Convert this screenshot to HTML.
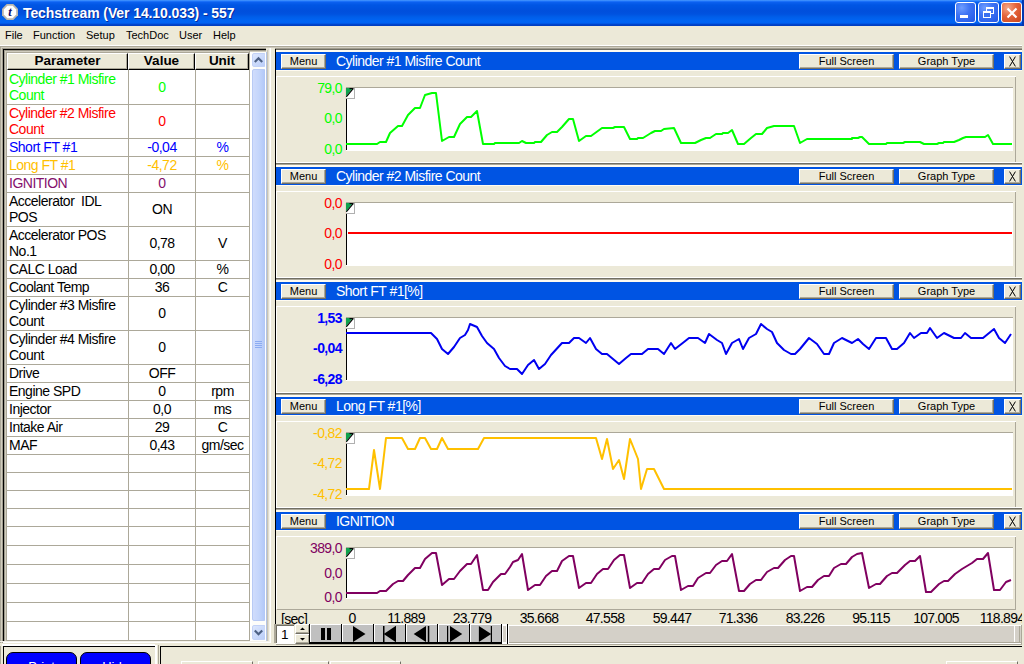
<!DOCTYPE html><html><head><meta charset="utf-8"><style>
*{margin:0;padding:0;box-sizing:border-box}
html,body{width:1024px;height:664px;overflow:hidden;background:#ece9d8;font-family:"Liberation Sans",sans-serif;position:relative}
div,span,svg{position:absolute}
.tbtn{top:2px;width:21px;height:21px;border:1px solid #fff;border-radius:3px;background:radial-gradient(circle at 30% 25%,#6e9dff 0%,#3e74f4 40%,#2257e6 100%)}
.tbtn.cl{background:radial-gradient(circle at 30% 25%,#f4a888 0%,#e4643a 45%,#c8451c 100%)}
.mn{top:29px;font-size:11px;color:#000;white-space:nowrap}
.cell{font-size:14px;letter-spacing:-0.5px;line-height:16px;white-space:nowrap}
.btn{background:#ece9d8;border-top:1px solid #fff;border-left:1px solid #fff;border-right:1px solid #716f64;border-bottom:1px solid #716f64;font-size:11px;text-align:center;color:#000;white-space:nowrap}
.gt{color:#fff;font-size:14px;letter-spacing:-0.52px;white-space:nowrap}
.lbl{font-size:14px;letter-spacing:-0.6px;text-align:right;white-space:nowrap}
.tl{font-size:14px;letter-spacing:-0.7px;top:610px;white-space:nowrap;color:#000}
</style></head><body>
<div style="left:0;top:0;width:1024px;height:26px;background:linear-gradient(#4a9bff 0px,#1a70f8 1.5px,#0a5fee 2.5px,#0056e4 5px,#004fdc 11px,#0052df 14px,#005ee9 17px,#0064f4 21px,#0062f2 23px,#0044cc 24.5px,#003cbc 26px)"></div>
<div style="left:1022px;top:0px;width:2px;height:26px;background:#0038b0;"></div>
<svg style="left:2px;top:4px" width="17" height="17" viewBox="0 0 17 17">
<polygon points="4.7,0 11.3,0 16,4.7 16,11.3 11.3,16 4.7,16 0,11.3 0,4.7" fill="#b9b6ae"/>
<polygon points="5.4,1.8 10.6,1.8 14.2,5.4 14.2,10.6 10.6,14.2 5.4,14.2 1.8,10.6 1.8,5.4" fill="#fff"/>
<text x="8" y="12.2" font-family="Liberation Serif" font-style="italic" font-weight="bold" font-size="12.5" fill="#10106a" text-anchor="middle">t</text>
</svg>
<div style="left:23px;top:5px;font-weight:bold;font-size:14px;letter-spacing:-0.1px;line-height:17px;color:#fff;text-shadow:1px 1px 0 #0a2a9a;white-space:nowrap">Techstream (Ver 14.10.033) - 557</div>
<div class="tbtn" style="left:955px"><div style="left:4px;top:12px;width:8px;height:3px;background:#fff"></div></div>
<div class="tbtn" style="left:978px"><div style="left:7px;top:4px;width:8px;height:7px;border:1px solid #fff;border-top-width:2px"></div><div style="left:4px;top:8px;width:8px;height:7px;border:1px solid #fff;border-top-width:2px;background:#3a70f0"></div></div>
<div class="tbtn cl" style="left:1001px"><svg style="left:3px;top:3px" width="14" height="14"><path d="M2.5,2.5 L11.5,11.5 M11.5,2.5 L2.5,11.5" stroke="#fff" stroke-width="2.2"/></svg></div>
<div class="mn" style="left:5px">File</div>
<div class="mn" style="left:33px">Function</div>
<div class="mn" style="left:86px">Setup</div>
<div class="mn" style="left:126px">TechDoc</div>
<div class="mn" style="left:179px">User</div>
<div class="mn" style="left:213px">Help</div>
<div style="left:0px;top:45px;width:1022px;height:1px;background:#fff;"></div>
<div style="left:0px;top:46px;width:1022px;height:1px;background:#aca899;"></div>
<div style="left:0px;top:47px;width:1022px;height:1px;background:#d0ccbe;"></div>
<div style="left:0px;top:48px;width:1022px;height:1px;background:#a09c8e;"></div>
<div style="left:0px;top:46px;width:1px;height:618px;background:#aca899;"></div>
<div style="left:1px;top:47px;width:1px;height:599px;background:#d0ccbe;"></div>
<div style="left:2px;top:48px;width:1px;height:598px;background:#a09c8e;"></div>
<div style="left:3px;top:49px;width:265px;height:1px;background:#000;"></div>
<div style="left:3px;top:49px;width:1px;height:592px;background:#000;"></div>
<div style="left:4px;top:50px;width:265px;height:1px;background:#a09c8e;"></div>
<div style="left:4px;top:50px;width:1px;height:591px;background:#a09c8e;"></div>
<div style="left:5px;top:51px;width:264px;height:1px;background:#d0ccbe;"></div>
<div style="left:6px;top:52px;width:263px;height:1px;background:#aca899;"></div>
<div style="left:5px;top:51px;width:1px;height:590px;background:#d0ccbe;"></div>
<div style="left:6px;top:52px;width:1px;height:589px;background:#aca899;"></div>
<div style="left:7px;top:53px;width:243px;height:588px;background:#fff;"></div>
<div style="left:7px;top:53px;width:121px;height:17px;background:#ece9d8;border-top:1px solid #fff;border-left:1px solid #fff;border-right:1px solid #000;border-bottom:1px solid #000;box-shadow:inset -1px -1px 0 #aca899"></div>
<div style="left:7px;top:53px;width:121px;text-align:center;font-weight:bold;font-size:13.5px;line-height:16px;color:#000">Parameter</div>
<div style="left:128px;top:53px;width:67px;height:17px;background:#ece9d8;border-top:1px solid #fff;border-left:1px solid #fff;border-right:1px solid #000;border-bottom:1px solid #000;box-shadow:inset -1px -1px 0 #aca899"></div>
<div style="left:128px;top:53px;width:67px;text-align:center;font-weight:bold;font-size:13.5px;line-height:16px;color:#000">Value</div>
<div style="left:195px;top:53px;width:54px;height:17px;background:#ece9d8;border-top:1px solid #fff;border-left:1px solid #fff;border-right:1px solid #000;border-bottom:1px solid #000;box-shadow:inset -1px -1px 0 #aca899"></div>
<div style="left:195px;top:53px;width:54px;text-align:center;font-weight:bold;font-size:13.5px;line-height:16px;color:#000">Unit</div>
<div class="cell" style="left:9px;top:71px;color:#00ff00">Cylinder #1 Misfire<br>Count</div>
<div class="cell" style="left:129px;width:66px;text-align:center;top:79px;color:#00ff00">0</div>
<div class="cell" style="left:9px;top:105px;color:#ff0000">Cylinder #2 Misfire<br>Count</div>
<div class="cell" style="left:129px;width:66px;text-align:center;top:113px;color:#ff0000">0</div>
<div class="cell" style="left:9px;top:139px;color:#0000ff">Short FT #1</div>
<div class="cell" style="left:129px;width:66px;text-align:center;top:139px;color:#0000ff">-0,04</div>
<div class="cell" style="left:196px;width:53px;text-align:center;top:139px;color:#0000ff">%</div>
<div class="cell" style="left:9px;top:157px;color:#ffc000">Long FT #1</div>
<div class="cell" style="left:129px;width:66px;text-align:center;top:157px;color:#ffc000">-4,72</div>
<div class="cell" style="left:196px;width:53px;text-align:center;top:157px;color:#ffc000">%</div>
<div class="cell" style="left:9px;top:175px;color:#84106c">IGNITION</div>
<div class="cell" style="left:129px;width:66px;text-align:center;top:175px;color:#84106c">0</div>
<div class="cell" style="left:9px;top:193px;color:#000">Accelerator&nbsp; IDL<br>POS</div>
<div class="cell" style="left:129px;width:66px;text-align:center;top:201px;color:#000">ON</div>
<div class="cell" style="left:9px;top:227px;color:#000">Accelerator POS<br>No.1</div>
<div class="cell" style="left:129px;width:66px;text-align:center;top:235px;color:#000">0,78</div>
<div class="cell" style="left:196px;width:53px;text-align:center;top:235px;color:#000">V</div>
<div class="cell" style="left:9px;top:261px;color:#000">CALC Load</div>
<div class="cell" style="left:129px;width:66px;text-align:center;top:261px;color:#000">0,00</div>
<div class="cell" style="left:196px;width:53px;text-align:center;top:261px;color:#000">%</div>
<div class="cell" style="left:9px;top:279px;color:#000">Coolant Temp</div>
<div class="cell" style="left:129px;width:66px;text-align:center;top:279px;color:#000">36</div>
<div class="cell" style="left:196px;width:53px;text-align:center;top:279px;color:#000">C</div>
<div class="cell" style="left:9px;top:297px;color:#000">Cylinder #3 Misfire<br>Count</div>
<div class="cell" style="left:129px;width:66px;text-align:center;top:305px;color:#000">0</div>
<div class="cell" style="left:9px;top:331px;color:#000">Cylinder #4 Misfire<br>Count</div>
<div class="cell" style="left:129px;width:66px;text-align:center;top:339px;color:#000">0</div>
<div class="cell" style="left:9px;top:365px;color:#000">Drive</div>
<div class="cell" style="left:129px;width:66px;text-align:center;top:365px;color:#000">OFF</div>
<div class="cell" style="left:9px;top:383px;color:#000">Engine SPD</div>
<div class="cell" style="left:129px;width:66px;text-align:center;top:383px;color:#000">0</div>
<div class="cell" style="left:196px;width:53px;text-align:center;top:383px;color:#000">rpm</div>
<div class="cell" style="left:9px;top:401px;color:#000">Injector</div>
<div class="cell" style="left:129px;width:66px;text-align:center;top:401px;color:#000">0,0</div>
<div class="cell" style="left:196px;width:53px;text-align:center;top:401px;color:#000">ms</div>
<div class="cell" style="left:9px;top:419px;color:#000">Intake Air</div>
<div class="cell" style="left:129px;width:66px;text-align:center;top:419px;color:#000">29</div>
<div class="cell" style="left:196px;width:53px;text-align:center;top:419px;color:#000">C</div>
<div class="cell" style="left:9px;top:437px;color:#000">MAF</div>
<div class="cell" style="left:129px;width:66px;text-align:center;top:437px;color:#000">0,43</div>
<div class="cell" style="left:196px;width:53px;text-align:center;top:437px;color:#000">gm/sec</div>
<div style="left:7px;top:104px;width:243px;height:1px;background:#aca899;"></div>
<div style="left:7px;top:138px;width:243px;height:1px;background:#aca899;"></div>
<div style="left:7px;top:156px;width:243px;height:1px;background:#aca899;"></div>
<div style="left:7px;top:174px;width:243px;height:1px;background:#aca899;"></div>
<div style="left:7px;top:192px;width:243px;height:1px;background:#aca899;"></div>
<div style="left:7px;top:226px;width:243px;height:1px;background:#aca899;"></div>
<div style="left:7px;top:260px;width:243px;height:1px;background:#aca899;"></div>
<div style="left:7px;top:278px;width:243px;height:1px;background:#aca899;"></div>
<div style="left:7px;top:296px;width:243px;height:1px;background:#aca899;"></div>
<div style="left:7px;top:330px;width:243px;height:1px;background:#aca899;"></div>
<div style="left:7px;top:364px;width:243px;height:1px;background:#aca899;"></div>
<div style="left:7px;top:382px;width:243px;height:1px;background:#aca899;"></div>
<div style="left:7px;top:400px;width:243px;height:1px;background:#aca899;"></div>
<div style="left:7px;top:418px;width:243px;height:1px;background:#aca899;"></div>
<div style="left:7px;top:436px;width:243px;height:1px;background:#aca899;"></div>
<div style="left:7px;top:454px;width:243px;height:1px;background:#aca899;"></div>
<div style="left:7px;top:472px;width:243px;height:1px;background:#aca899;"></div>
<div style="left:7px;top:490px;width:243px;height:1px;background:#aca899;"></div>
<div style="left:7px;top:508px;width:243px;height:1px;background:#aca899;"></div>
<div style="left:7px;top:526px;width:243px;height:1px;background:#aca899;"></div>
<div style="left:7px;top:545px;width:243px;height:1px;background:#aca899;"></div>
<div style="left:7px;top:564px;width:243px;height:1px;background:#aca899;"></div>
<div style="left:7px;top:583px;width:243px;height:1px;background:#aca899;"></div>
<div style="left:7px;top:602px;width:243px;height:1px;background:#aca899;"></div>
<div style="left:7px;top:621px;width:243px;height:1px;background:#aca899;"></div>
<div style="left:128px;top:70px;width:1px;height:571px;background:#aca899;"></div>
<div style="left:195px;top:70px;width:1px;height:571px;background:#aca899;"></div>
<div style="left:249px;top:51px;width:1px;height:590px;background:#aca899;"></div>
<div style="left:7px;top:640px;width:243px;height:1px;background:#aca899;"></div>
<div style="left:250px;top:52px;width:15px;height:589px;background:#fdfdfa;"></div>
<div style="left:250px;top:52px;width:2px;height:589px;background:#fff;"></div>
<div style="left:252px;top:53px;width:14px;height:14px;border-radius:2px;background:linear-gradient(135deg,#dde7fd,#b9cdf9);border:1px solid #c3d2f7"></div>
<svg style="left:253px;top:56px" width="12" height="8"><path d="M1.8,6 L5.5,2.3 L9.2,6" stroke="#4d6185" stroke-width="2.2" fill="none"/></svg>
<div style="left:252px;top:69px;width:14px;height:552px;border-radius:2px;background:linear-gradient(90deg,#d0dcfc,#c4d5fb 50%,#b1c7f7);border:1px solid #b8caf5"></div>
<div style="left:255px;top:341px;width:7px;height:1px;background:#8cabf2;"></div>
<div style="left:255px;top:343px;width:7px;height:1px;background:#8cabf2;"></div>
<div style="left:255px;top:345px;width:7px;height:1px;background:#8cabf2;"></div>
<div style="left:255px;top:347px;width:7px;height:1px;background:#8cabf2;"></div>
<div style="left:252px;top:625px;width:14px;height:15px;border-radius:2px;background:linear-gradient(135deg,#dde7fd,#b9cdf9);border:1px solid #c3d2f7"></div>
<svg style="left:253px;top:628px" width="12" height="9"><path d="M1.8,2.5 L5.5,6.2 L9.2,2.5" stroke="#4d6185" stroke-width="2.2" fill="none"/></svg>
<div style="left:266px;top:48px;width:9px;height:600px;background:#ece9d8;"></div>
<div style="left:265px;top:52px;width:1px;height:589px;background:#fff;"></div>
<div style="left:266px;top:52px;width:1px;height:589px;background:#b4c4e4;"></div>
<div style="left:267px;top:50px;width:1px;height:592px;background:#c8c4b6;"></div>
<div style="left:268px;top:49px;width:1px;height:593px;background:#e0ddd0;"></div>
<div style="left:269px;top:48px;width:1px;height:595px;background:#f4f2ea;"></div>
<div style="left:270px;top:48px;width:1px;height:596px;background:#fff;"></div>
<div style="left:0px;top:641px;width:270px;height:1px;background:#f4f2ea;"></div>
<div style="left:3px;top:642px;width:267px;height:1px;background:#fff;"></div>
<div style="left:275px;top:49px;width:747px;height:1px;background:#716f64;"></div>
<div style="left:275px;top:49px;width:1px;height:575px;background:#000;"></div>
<div style="left:276px;top:50px;width:746px;height:2px;background:#fffbf0;"></div>
<div style="left:276px;top:52px;width:746px;height:18px;background:#0054e3;"></div>
<div class="btn" style="left:281px;top:54px;width:45px;height:15px;line-height:13px;box-shadow:inset -1px -1px 0 #aca899">Menu</div>
<div class="gt" style="left:336px;top:53px;line-height:16px">Cylinder #1 Misfire Count</div>
<div class="btn" style="left:799px;top:54px;width:95px;height:15px;line-height:13px;box-shadow:inset -1px -1px 0 #aca899">Full Screen</div>
<div class="btn" style="left:899px;top:54px;width:95px;height:15px;line-height:13px;box-shadow:inset -1px -1px 0 #aca899">Graph Type</div>
<div class="btn" style="left:1004px;top:54px;width:17px;height:15px;box-shadow:inset -1px -1px 0 #aca899"></div>
<svg style="left:1004px;top:54px" width="17" height="15"><path d="M5.6,2.6 L11.4,12.4 M11.4,2.6 L5.6,12.4" stroke="#000" stroke-width="1" fill="none"/></svg>
<div style="left:276px;top:76px;width:740px;height:1px;background:#fff;"></div>
<div style="left:276px;top:76px;width:1px;height:87px;background:#fff;"></div>
<div style="left:276px;top:70px;width:746px;height:1px;background:#fffbf0;"></div>
<div style="left:1015px;top:77px;width:1px;height:86px;background:#aca899;"></div>
<div style="left:276px;top:162px;width:746px;height:1px;background:#fff;"></div>
<div style="left:276px;top:163px;width:746px;height:1px;background:#716f64;"></div>
<div style="left:276px;top:164px;width:746px;height:1px;background:#aca899;"></div>
<div style="left:276px;top:165px;width:746px;height:2px;background:#fffbf0;"></div>
<div style="left:346px;top:87px;width:667px;height:1px;background:#aca899;"></div>
<div style="left:346px;top:88px;width:667px;height:63px;background:#fff;"></div>
<div style="left:346px;top:99px;width:1px;height:51px;background:#000;"></div>
<svg style="left:345px;top:87px" width="12" height="13" shape-rendering="crispEdges"><rect x="9" y="1" width="1" height="11" fill="#b0b0b0"/><rect x="1" y="11" width="9" height="1" fill="#b0b0b0"/><rect x="0" y="1" width="1" height="11" fill="#e8d8c8"/></svg>
<svg style="left:345px;top:87px" width="12" height="13"><polygon points="1,1 8,1 1,9.5" fill="#0fa34e"/><path d="M8.2,1.6 L1.3,9.8" stroke="#000" stroke-width="1.1"/><path d="M4.5,1.6 L8.5,1.6" stroke="#000" stroke-width="1.1"/></svg>
<div class="lbl" style="left:280px;width:62px;top:80px;line-height:16px;color:#00ff00;font-weight:normal">79,0</div>
<div class="lbl" style="left:280px;width:62px;top:110px;line-height:16px;color:#00ff00;font-weight:normal">0,0</div>
<div class="lbl" style="left:280px;width:62px;top:141px;line-height:16px;color:#00ff00;font-weight:normal">0,0</div>
<svg style="left:0;top:0" width="1024" height="664"><polyline points="346,144 377,144 380,142 386,142 390,133 398,126 402,126 408,115 415,108 420,108 425,95 432,93 436,93 442,141 449,137 454,137 460,124 467,117 471,117 477,111 483,144 494,144 495,143 519,143 522,141 526,143 534,143 535,142 541,142 547,135 552,132 557,132 562,127 569,119 573,119 579,141 586,136 591,136 602,128 613,128 615,127 624,127 630,139 637,139 638,138 643,138 651,133 655,131 661,131 664,129 674,128 681,143 695,143 701,140 706,138 710,138 716,134 722,134 723,133 728,133 732,130 738,144 744,144 751,138 756,134 762,134 767,128 774,126 794,126 800,143 807,139 852,139 852,138 858,138 860,137 862,137 869,144 886,144 887,143 903,143 905,142 920,142 924,144 937,144 939,143 943,143 944,142 954,142 959,140 963,138 966,137 985,137 988,135 993,144 1012,144" fill="none" stroke="#00ff00" stroke-width="2" stroke-linejoin="round"/></svg>
<div style="left:276px;top:167px;width:746px;height:18px;background:#0054e3;"></div>
<div class="btn" style="left:281px;top:169px;width:45px;height:15px;line-height:13px;box-shadow:inset -1px -1px 0 #aca899">Menu</div>
<div class="gt" style="left:336px;top:168px;line-height:16px">Cylinder #2 Misfire Count</div>
<div class="btn" style="left:799px;top:169px;width:95px;height:15px;line-height:13px;box-shadow:inset -1px -1px 0 #aca899">Full Screen</div>
<div class="btn" style="left:899px;top:169px;width:95px;height:15px;line-height:13px;box-shadow:inset -1px -1px 0 #aca899">Graph Type</div>
<div class="btn" style="left:1004px;top:169px;width:17px;height:15px;box-shadow:inset -1px -1px 0 #aca899"></div>
<svg style="left:1004px;top:169px" width="17" height="15"><path d="M5.6,2.6 L11.4,12.4 M11.4,2.6 L5.6,12.4" stroke="#000" stroke-width="1" fill="none"/></svg>
<div style="left:276px;top:191px;width:740px;height:1px;background:#fff;"></div>
<div style="left:276px;top:191px;width:1px;height:87px;background:#fff;"></div>
<div style="left:276px;top:185px;width:746px;height:1px;background:#fffbf0;"></div>
<div style="left:1015px;top:192px;width:1px;height:86px;background:#aca899;"></div>
<div style="left:276px;top:277px;width:746px;height:1px;background:#fff;"></div>
<div style="left:276px;top:278px;width:746px;height:1px;background:#716f64;"></div>
<div style="left:276px;top:279px;width:746px;height:1px;background:#aca899;"></div>
<div style="left:276px;top:280px;width:746px;height:2px;background:#fffbf0;"></div>
<div style="left:346px;top:202px;width:667px;height:1px;background:#aca899;"></div>
<div style="left:346px;top:203px;width:667px;height:63px;background:#fff;"></div>
<div style="left:346px;top:214px;width:1px;height:51px;background:#000;"></div>
<svg style="left:345px;top:202px" width="12" height="13" shape-rendering="crispEdges"><rect x="9" y="1" width="1" height="11" fill="#b0b0b0"/><rect x="1" y="11" width="9" height="1" fill="#b0b0b0"/><rect x="0" y="1" width="1" height="11" fill="#e8d8c8"/></svg>
<svg style="left:345px;top:202px" width="12" height="13"><polygon points="1,1 8,1 1,9.5" fill="#0fa34e"/><path d="M8.2,1.6 L1.3,9.8" stroke="#000" stroke-width="1.1"/><path d="M4.5,1.6 L8.5,1.6" stroke="#000" stroke-width="1.1"/></svg>
<div class="lbl" style="left:280px;width:62px;top:195px;line-height:16px;color:#ff0000;font-weight:normal">0,0</div>
<div class="lbl" style="left:280px;width:62px;top:225px;line-height:16px;color:#ff0000;font-weight:normal">0,0</div>
<div class="lbl" style="left:280px;width:62px;top:256px;line-height:16px;color:#ff0000;font-weight:normal">0,0</div>
<svg style="left:0;top:0" width="1024" height="664"><polyline points="348,233 1012,233" fill="none" stroke="#ff0000" stroke-width="2" stroke-linejoin="round"/></svg>
<div style="left:276px;top:282px;width:746px;height:18px;background:#0054e3;"></div>
<div class="btn" style="left:281px;top:284px;width:45px;height:15px;line-height:13px;box-shadow:inset -1px -1px 0 #aca899">Menu</div>
<div class="gt" style="left:336px;top:283px;line-height:16px">Short FT #1[%]</div>
<div class="btn" style="left:799px;top:284px;width:95px;height:15px;line-height:13px;box-shadow:inset -1px -1px 0 #aca899">Full Screen</div>
<div class="btn" style="left:899px;top:284px;width:95px;height:15px;line-height:13px;box-shadow:inset -1px -1px 0 #aca899">Graph Type</div>
<div class="btn" style="left:1004px;top:284px;width:17px;height:15px;box-shadow:inset -1px -1px 0 #aca899"></div>
<svg style="left:1004px;top:284px" width="17" height="15"><path d="M5.6,2.6 L11.4,12.4 M11.4,2.6 L5.6,12.4" stroke="#000" stroke-width="1" fill="none"/></svg>
<div style="left:276px;top:306px;width:740px;height:1px;background:#fff;"></div>
<div style="left:276px;top:306px;width:1px;height:87px;background:#fff;"></div>
<div style="left:276px;top:300px;width:746px;height:1px;background:#fffbf0;"></div>
<div style="left:1015px;top:307px;width:1px;height:86px;background:#aca899;"></div>
<div style="left:276px;top:392px;width:746px;height:1px;background:#fff;"></div>
<div style="left:276px;top:393px;width:746px;height:1px;background:#716f64;"></div>
<div style="left:276px;top:394px;width:746px;height:1px;background:#aca899;"></div>
<div style="left:276px;top:395px;width:746px;height:2px;background:#fffbf0;"></div>
<div style="left:346px;top:317px;width:667px;height:1px;background:#aca899;"></div>
<div style="left:346px;top:318px;width:667px;height:63px;background:#fff;"></div>
<div style="left:346px;top:329px;width:1px;height:51px;background:#000;"></div>
<svg style="left:345px;top:317px" width="12" height="13" shape-rendering="crispEdges"><rect x="9" y="1" width="1" height="11" fill="#b0b0b0"/><rect x="1" y="11" width="9" height="1" fill="#b0b0b0"/><rect x="0" y="1" width="1" height="11" fill="#e8d8c8"/></svg>
<svg style="left:345px;top:317px" width="12" height="13"><polygon points="1,1 8,1 1,9.5" fill="#0fa34e"/><path d="M8.2,1.6 L1.3,9.8" stroke="#000" stroke-width="1.1"/><path d="M4.5,1.6 L8.5,1.6" stroke="#000" stroke-width="1.1"/></svg>
<div class="lbl" style="left:280px;width:62px;top:310px;line-height:16px;color:#0000ff;font-weight:bold">1,53</div>
<div class="lbl" style="left:280px;width:62px;top:340px;line-height:16px;color:#0000ff;font-weight:bold">-0,04</div>
<div class="lbl" style="left:280px;width:62px;top:371px;line-height:16px;color:#0000ff;font-weight:bold">-6,28</div>
<svg style="left:0;top:0" width="1024" height="664"><polyline points="346,333 431,333 437,339 442,349 448,354 454,347 460,338 465,335 468,330 470,324 477,327 482,336 487,343 494,349 499,358 505,366 510,369 517,369 522,374 528,365 534,360 539,369 545,364 551,355 562,343 569,343 574,338 579,338 586,343 590,338 596,349 602,354 607,354 619,364 626,358 631,354 642,354 648,349 658,349 664,354 671,343 675,349 684,342 689,338 698,338 705,343 709,334 717,340 722,343 726,354 732,343 739,339 743,349 749,338 756,334 761,324 767,329 772,332 777,343 784,350 791,354 795,354 800,349 809,338 817,344 824,354 829,354 834,343 842,338 852,343 858,339 863,344 869,349 876,338 886,338 892,349 897,349 904,343 910,333 914,338 921,333 927,333 930,328 937,338 944,333 954,338 961,338 965,333 971,338 983,338 994,329 999,338 1005,343 1011,334" fill="none" stroke="#0000f0" stroke-width="2" stroke-linejoin="round"/></svg>
<div style="left:276px;top:397px;width:746px;height:18px;background:#0054e3;"></div>
<div class="btn" style="left:281px;top:399px;width:45px;height:15px;line-height:13px;box-shadow:inset -1px -1px 0 #aca899">Menu</div>
<div class="gt" style="left:336px;top:398px;line-height:16px">Long FT #1[%]</div>
<div class="btn" style="left:799px;top:399px;width:95px;height:15px;line-height:13px;box-shadow:inset -1px -1px 0 #aca899">Full Screen</div>
<div class="btn" style="left:899px;top:399px;width:95px;height:15px;line-height:13px;box-shadow:inset -1px -1px 0 #aca899">Graph Type</div>
<div class="btn" style="left:1004px;top:399px;width:17px;height:15px;box-shadow:inset -1px -1px 0 #aca899"></div>
<svg style="left:1004px;top:399px" width="17" height="15"><path d="M5.6,2.6 L11.4,12.4 M11.4,2.6 L5.6,12.4" stroke="#000" stroke-width="1" fill="none"/></svg>
<div style="left:276px;top:421px;width:740px;height:1px;background:#fff;"></div>
<div style="left:276px;top:421px;width:1px;height:87px;background:#fff;"></div>
<div style="left:276px;top:415px;width:746px;height:1px;background:#fffbf0;"></div>
<div style="left:1015px;top:422px;width:1px;height:86px;background:#aca899;"></div>
<div style="left:276px;top:507px;width:746px;height:1px;background:#fff;"></div>
<div style="left:276px;top:508px;width:746px;height:1px;background:#716f64;"></div>
<div style="left:276px;top:509px;width:746px;height:1px;background:#aca899;"></div>
<div style="left:276px;top:510px;width:746px;height:2px;background:#fffbf0;"></div>
<div style="left:346px;top:432px;width:667px;height:1px;background:#aca899;"></div>
<div style="left:346px;top:433px;width:667px;height:63px;background:#fff;"></div>
<div style="left:346px;top:444px;width:1px;height:51px;background:#000;"></div>
<svg style="left:345px;top:432px" width="12" height="13" shape-rendering="crispEdges"><rect x="9" y="1" width="1" height="11" fill="#b0b0b0"/><rect x="1" y="11" width="9" height="1" fill="#b0b0b0"/><rect x="0" y="1" width="1" height="11" fill="#e8d8c8"/></svg>
<svg style="left:345px;top:432px" width="12" height="13"><polygon points="1,1 8,1 1,9.5" fill="#0fa34e"/><path d="M8.2,1.6 L1.3,9.8" stroke="#000" stroke-width="1.1"/><path d="M4.5,1.6 L8.5,1.6" stroke="#000" stroke-width="1.1"/></svg>
<div class="lbl" style="left:280px;width:62px;top:425px;line-height:16px;color:#ffc000;font-weight:normal">-0,82</div>
<div class="lbl" style="left:280px;width:62px;top:455px;line-height:16px;color:#ffc000;font-weight:normal">-4,72</div>
<div class="lbl" style="left:280px;width:62px;top:486px;line-height:16px;color:#ffc000;font-weight:normal">-4,72</div>
<svg style="left:0;top:0" width="1024" height="664"><polyline points="346,489 369,489 374,450 380,489 386,438 402,438 408,449 415,449 420,438 425,438 431,449 437,449 442,438 448,449 478,449 484,438 596,438 602,459 607,439 613,469 619,460 624,479 630,439 638,459 641,489 647,469 654,469 664,489 1012,489" fill="none" stroke="#ffc000" stroke-width="2" stroke-linejoin="round"/></svg>
<div style="left:276px;top:512px;width:746px;height:18px;background:#0054e3;"></div>
<div class="btn" style="left:281px;top:514px;width:45px;height:15px;line-height:13px;box-shadow:inset -1px -1px 0 #aca899">Menu</div>
<div class="gt" style="left:336px;top:513px;line-height:16px">IGNITION</div>
<div class="btn" style="left:799px;top:514px;width:95px;height:15px;line-height:13px;box-shadow:inset -1px -1px 0 #aca899">Full Screen</div>
<div class="btn" style="left:899px;top:514px;width:95px;height:15px;line-height:13px;box-shadow:inset -1px -1px 0 #aca899">Graph Type</div>
<div class="btn" style="left:1004px;top:514px;width:17px;height:15px;box-shadow:inset -1px -1px 0 #aca899"></div>
<svg style="left:1004px;top:514px" width="17" height="15"><path d="M5.6,2.6 L11.4,12.4 M11.4,2.6 L5.6,12.4" stroke="#000" stroke-width="1" fill="none"/></svg>
<div style="left:276px;top:536px;width:740px;height:1px;background:#fff;"></div>
<div style="left:276px;top:536px;width:1px;height:73px;background:#fff;"></div>
<div style="left:276px;top:530px;width:746px;height:1px;background:#fffbf0;"></div>
<div style="left:1015px;top:537px;width:1px;height:72px;background:#aca899;"></div>
<div style="left:277px;top:609px;width:739px;height:1px;background:#aca899;"></div>
<div style="left:346px;top:547px;width:667px;height:1px;background:#aca899;"></div>
<div style="left:346px;top:548px;width:667px;height:51px;background:#fff;"></div>
<div style="left:346px;top:559px;width:1px;height:39px;background:#000;"></div>
<svg style="left:345px;top:547px" width="12" height="13" shape-rendering="crispEdges"><rect x="9" y="1" width="1" height="11" fill="#b0b0b0"/><rect x="1" y="11" width="9" height="1" fill="#b0b0b0"/><rect x="0" y="1" width="1" height="11" fill="#e8d8c8"/></svg>
<svg style="left:345px;top:547px" width="12" height="13"><polygon points="1,1 8,1 1,9.5" fill="#0fa34e"/><path d="M8.2,1.6 L1.3,9.8" stroke="#000" stroke-width="1.1"/><path d="M4.5,1.6 L8.5,1.6" stroke="#000" stroke-width="1.1"/></svg>
<div class="lbl" style="left:280px;width:62px;top:540px;line-height:16px;color:#800060;font-weight:normal">389,0</div>
<div class="lbl" style="left:280px;width:62px;top:565px;line-height:16px;color:#800060;font-weight:normal">0,0</div>
<div class="lbl" style="left:280px;width:62px;top:589px;line-height:16px;color:#800060;font-weight:normal">0,0</div>
<svg style="left:0;top:0" width="1024" height="664"><polyline points="346,593 377,593 380,591 386,591 393,584 398,581 403,581 408,575 415,568 420,568 425,559 432,553 436,553 442,585 449,579 454,579 460,571 467,564 471,564 477,555 483,590 488,590 493,582 501,574 505,574 510,567 513,562 518,560 522,554 528,590 535,585 540,585 546,576 552,571 557,571 562,561 569,556 573,556 579,588 586,583 591,583 597,574 603,569 608,569 614,560 620,555 624,555 630,588 637,583 642,583 648,574 654,569 659,569 665,560 672,556 675,556 681,590 688,586 693,586 698,578 706,573 710,573 716,565 722,561 727,561 732,554 739,591 744,591 750,584 756,580 761,580 767,572 774,568 778,568 785,560 791,556 794,556 800,591 807,587 812,587 818,580 824,576 829,576 834,568 841,564 846,564 852,557 857,554 862,553 869,588 876,584 880,584 887,576 892,573 897,573 905,565 910,561 915,561 920,556 926,592 931,592 939,584 944,581 948,581 955,574 962,569 967,566 972,563 977,559 983,559 988,553 994,590 1000,590 1006,582 1011,580" fill="none" stroke="#800060" stroke-width="2" stroke-linejoin="round"/></svg>
<div class="tl" style="left:281px;top:611px;color:#000">[sec]</div>
<div class="tl" style="left:312px;width:80px;text-align:center">0</div>
<div class="tl" style="left:366px;width:80px;text-align:center">11.889</div>
<div class="tl" style="left:432px;width:80px;text-align:center">23.779</div>
<div class="tl" style="left:499px;width:80px;text-align:center">35.668</div>
<div class="tl" style="left:565px;width:80px;text-align:center">47.558</div>
<div class="tl" style="left:632px;width:80px;text-align:center">59.447</div>
<div class="tl" style="left:698px;width:80px;text-align:center">71.336</div>
<div class="tl" style="left:765px;width:80px;text-align:center">83.226</div>
<div class="tl" style="left:831px;width:80px;text-align:center">95.115</div>
<div class="tl" style="left:896px;width:80px;text-align:center">107.005</div>
<div style="left:970px;top:605px;width:52px;height:20px;overflow:hidden"><div class="tl" style="left:-8px;top:5px;width:80px;text-align:center">118.894</div></div>
<div style="left:270px;top:645px;width:752px;height:1px;background:#ece9d8;"></div>
<div style="left:274px;top:624px;width:21px;height:1px;background:#aca899;"></div>
<div style="left:274px;top:624px;width:2px;height:19px;background:#aca899;"></div>
<div style="left:276px;top:625px;width:18px;height:1px;background:#716f64;"></div>
<div style="left:276px;top:625px;width:1px;height:18px;background:#716f64;"></div>
<div style="left:277px;top:626px;width:17px;height:17px;background:#fff;"></div>
<div style="left:274px;top:643px;width:21px;height:1px;background:#fff;"></div>
<div style="left:276px;top:644px;width:746px;height:1px;background:#aca899;"></div>
<div class="cell" style="left:281px;top:627px;color:#000;font-size:13.5px">1</div>
<div class="btn" style="left:295px;top:624px;width:15px;height:10px;box-shadow:inset -1px -1px 0 #aca899"></div>
<div class="btn" style="left:295px;top:634px;width:15px;height:10px;box-shadow:inset -1px -1px 0 #aca899"></div>
<svg style="left:295px;top:624px" width="15" height="20"><path d="M5,6 L10,6 L7.5,3.5Z M5,14 L10,14 L7.5,16.5Z" fill="#000"/></svg>
<div style="left:309px;top:624px;width:1px;height:20px;background:#000;"></div>
<div style="left:310px;top:624px;width:31px;height:1px;background:#fff;"></div>
<div style="left:310px;top:625px;width:1px;height:17px;background:#fff;"></div>
<div style="left:311px;top:625px;width:30px;height:17px;background:#c0c0c0;"></div>
<div style="left:309px;top:642px;width:33px;height:2px;background:#000;"></div>
<div style="left:341px;top:624px;width:1px;height:20px;background:#000;"></div>
<div style="left:342px;top:624px;width:31px;height:1px;background:#fff;"></div>
<div style="left:342px;top:625px;width:1px;height:17px;background:#fff;"></div>
<div style="left:343px;top:625px;width:30px;height:17px;background:#c0c0c0;"></div>
<div style="left:341px;top:642px;width:33px;height:2px;background:#000;"></div>
<div style="left:373px;top:624px;width:1px;height:20px;background:#000;"></div>
<div style="left:374px;top:624px;width:31px;height:1px;background:#fff;"></div>
<div style="left:374px;top:625px;width:1px;height:17px;background:#fff;"></div>
<div style="left:375px;top:625px;width:30px;height:17px;background:#c0c0c0;"></div>
<div style="left:373px;top:642px;width:33px;height:2px;background:#000;"></div>
<div style="left:405px;top:624px;width:1px;height:20px;background:#000;"></div>
<div style="left:406px;top:624px;width:31px;height:1px;background:#fff;"></div>
<div style="left:406px;top:625px;width:1px;height:17px;background:#fff;"></div>
<div style="left:407px;top:625px;width:30px;height:17px;background:#c0c0c0;"></div>
<div style="left:405px;top:642px;width:33px;height:2px;background:#000;"></div>
<div style="left:437px;top:624px;width:1px;height:20px;background:#000;"></div>
<div style="left:438px;top:624px;width:31px;height:1px;background:#fff;"></div>
<div style="left:438px;top:625px;width:1px;height:17px;background:#fff;"></div>
<div style="left:439px;top:625px;width:30px;height:17px;background:#c0c0c0;"></div>
<div style="left:437px;top:642px;width:33px;height:2px;background:#000;"></div>
<div style="left:469px;top:624px;width:1px;height:20px;background:#000;"></div>
<div style="left:470px;top:624px;width:31px;height:1px;background:#fff;"></div>
<div style="left:470px;top:625px;width:1px;height:17px;background:#fff;"></div>
<div style="left:471px;top:625px;width:30px;height:17px;background:#c0c0c0;"></div>
<div style="left:469px;top:642px;width:33px;height:2px;background:#000;"></div>
<div style="left:501px;top:624px;width:1px;height:20px;background:#000;"></div>
<svg style="left:309px;top:624px" width="200" height="20"><g fill="#000"><rect x="12" y="4" width="4" height="12"/><rect x="18" y="4" width="4" height="12"/><polygon points="44,2 56.5,10 44,18"/><rect x="74" y="2" width="1.5" height="16"/><polygon points="74.7,10 87,1.8 87,18.2"/><polygon points="104.7,10 117,2 117,18"/><rect x="118.8" y="2" width="1.5" height="16"/><rect x="138" y="2" width="1.2" height="16"/><polygon points="141,2 153.2,10 141,18"/><polygon points="169.9,2 182.2,10 169.9,18"/><rect x="181.8" y="2" width="1.2" height="16"/></g></svg>
<div style="left:502px;top:624px;width:5px;height:20px;background:#fff;"></div>
<div style="left:503px;top:626px;width:3px;height:16px;background:#d4d0c8;"></div>
<div style="left:507px;top:624px;width:1px;height:20px;background:#000;"></div>
<div style="left:508px;top:625px;width:514px;height:19px;background:#fff;"></div>
<div style="left:509px;top:626px;width:512px;height:16px;background:#d4d0c8;"></div>
<div style="left:509px;top:642px;width:512px;height:1px;background:#aca899;"></div>
<div style="left:1014px;top:626px;width:1px;height:16px;background:#fff;"></div>
<div style="left:1019px;top:626px;width:1px;height:16px;background:#aca899;"></div>
<div style="left:1021px;top:625px;width:1px;height:19px;background:#aca899;"></div>
<div style="left:0px;top:643px;width:276px;height:3px;background:#ece9d8;"></div>
<div style="left:2px;top:644px;width:153px;height:2px;background:#fff;"></div>
<div style="left:3px;top:646px;width:152px;height:1px;background:#000;"></div>
<div style="left:3px;top:646px;width:1px;height:18px;background:#000;"></div>
<div style="left:155px;top:645px;width:2px;height:19px;background:#fff;"></div>
<div style="left:158px;top:645px;width:1px;height:19px;background:#aca899;"></div>
<div style="left:160px;top:646px;width:862px;height:1px;background:#000;"></div>
<div style="left:160px;top:646px;width:1px;height:18px;background:#000;"></div>
<div style="left:6px;top:652px;width:71px;height:24px;background:#0000ff;border:1px solid #000;border-radius:7px"></div>
<div style="left:6px;top:659px;width:71px;text-align:center;color:#fff;font-size:13px">Print</div>
<div style="left:80px;top:652px;width:71px;height:24px;background:#0000ff;border:1px solid #000;border-radius:7px"></div>
<div style="left:80px;top:659px;width:71px;text-align:center;color:#fff;font-size:13px">Hide</div>
<div style="left:181px;top:661px;width:72px;height:5px;background:#ece9d8;border-top:1px solid #fff;border-left:1px solid #fff;border-right:1px solid #716f64"></div>
<div style="left:258px;top:661px;width:71px;height:5px;background:#ece9d8;border-top:1px solid #fff;border-left:1px solid #fff;border-right:1px solid #716f64"></div>
<div style="left:330px;top:661px;width:71px;height:5px;background:#ece9d8;border-top:1px solid #fff;border-left:1px solid #fff;border-right:1px solid #716f64"></div>
<div style="left:946px;top:661px;width:72px;height:5px;background:#ece9d8;border-top:1px solid #fff;border-left:1px solid #fff;border-right:1px solid #716f64"></div>
</body></html>
